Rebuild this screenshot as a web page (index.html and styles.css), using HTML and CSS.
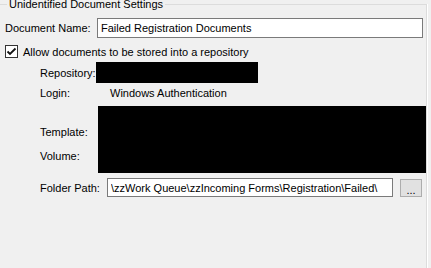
FILE: index.html
```html
<!DOCTYPE html>
<html lang="en">
<head>
  <meta charset="UTF-8" />
  <title>Unidentified Document Settings</title>
  <link rel="stylesheet" href="styles.css">
</head>
<body>

<div class="group">
  <div class="group-title">Unidentified Document Settings</div>

  <div class="row row-name">
    <label class="label-main" for="docName">Document Name:</label>
    <input type="text" id="docName" class="text-box name-box" value="Failed Registration Documents" />
  </div>

  <div class="row row-check">
    <span class="check-box">
      <svg width="11" height="11" viewBox="0 0 11 11"><path d="M1.5 5.5 L4 8 L9.5 2.5" fill="none" stroke="#111" stroke-width="1.8"/></svg>
    </span>
    <span class="check-label">Allow documents to be stored into a repository</span>
  </div>

  <div class="row row-repo">
    <span class="label-sub label-repo">Repository:</span>
    <span class="redacted repo-block"></span>
  </div>

  <div class="row row-login">
    <span class="label-sub label-login">Login:</span>
    <span class="login-value">Windows Authentication</span>
  </div>

  <div class="row row-store">
    <div class="store-labels">
      <span class="label-sub">Template:</span>
      <span class="label-sub">Volume:</span>
    </div>
    <span class="redacted store-block"></span>
  </div>

  <div class="row row-folder">
    <span class="label-sub label-folder">Folder Path:</span>
    <input type="text" class="text-box folder-box" value="\zzWork Queue\zzIncoming Forms\Registration\Failed\" />
    <button class="browse-btn">...</button>
  </div>
</div>

</body>
</html>
```

FILE: styles.css
```css
/* Page */
body {
  margin: 0;
  background: #f0f0f0;
  font-family: "Liberation Sans", Arial, sans-serif;
  font-size: 11px;
  color: #000;
  overflow: hidden;
}

/* Group box */
.group {
  position: relative;
  margin: 4px 4px 0 -4px;
  height: 263px;
  border: 1px solid #dcdcdc;
  border-bottom: none;
  box-shadow: 1px 0 0 #fff;
  padding-left: 8px;
}

.group-title {
  position: absolute;
  top: -7px;
  left: 10px;
  padding: 0 2px;
  background: #f0f0f0;
  line-height: 13px;
}

.row {
  display: flex;
  align-items: center;
}

/* Document name */
.row-name {
  margin-top: 13px;
  height: 20px;
}

.label-main {
  width: 92px;
}

.text-box {
  box-sizing: border-box;
  margin: 0;
  border: 1px solid #7a7a7a;
  background: #fff;
  font-family: inherit;
  font-size: 11px;
  color: #000;
  padding: 0 3px;
  outline: none;
}

.name-box {
  width: 326px;
  height: 20px;
}

/* Checkbox */
.row-check {
  margin-top: 7px;
  height: 13px;
}

.check-box {
  box-sizing: border-box;
  width: 13px;
  height: 13px;
  border: 1px solid #333;
  background: #fff;
  display: flex;
  align-items: center;
  justify-content: center;
}

.check-label {
  margin-left: 5px;
}

/* Repository details */
.label-sub {
  display: block;
}

.label-repo,
.label-login,
.label-folder {
  margin-left: 35px;
}

.redacted {
  display: block;
  background: #000;
}

.row-repo {
  margin-top: 4px;
  height: 21px;
}

.label-repo {
  width: 56px;
}

.repo-block {
  width: 162px;
  height: 21px;
}

.row-login {
  margin-top: 3px;
  height: 14px;
}

.label-login {
  width: 70px;
}

.row-store {
  margin-top: 6px;
  align-items: stretch;
}

.store-labels {
  width: 58px;
  margin-left: 35px;
  display: flex;
  flex-direction: column;
  gap: 12px;
  padding-top: 20px;
}

.store-block {
  width: 329px;
  height: 67px;
}

/* Folder path */
.row-folder {
  margin-top: 5px;
  height: 19px;
}

.label-folder {
  width: 67px;
}

.folder-box {
  width: 286px;
  height: 19px;
}

.browse-btn {
  box-sizing: border-box;
  margin-left: 7px;
  width: 22px;
  height: 18px;
  border: 1px solid #adadad;
  background: #e1e1e1;
  font-family: inherit;
  font-size: 11px;
  padding: 4px 0 0;
  line-height: 10px;
}
```
